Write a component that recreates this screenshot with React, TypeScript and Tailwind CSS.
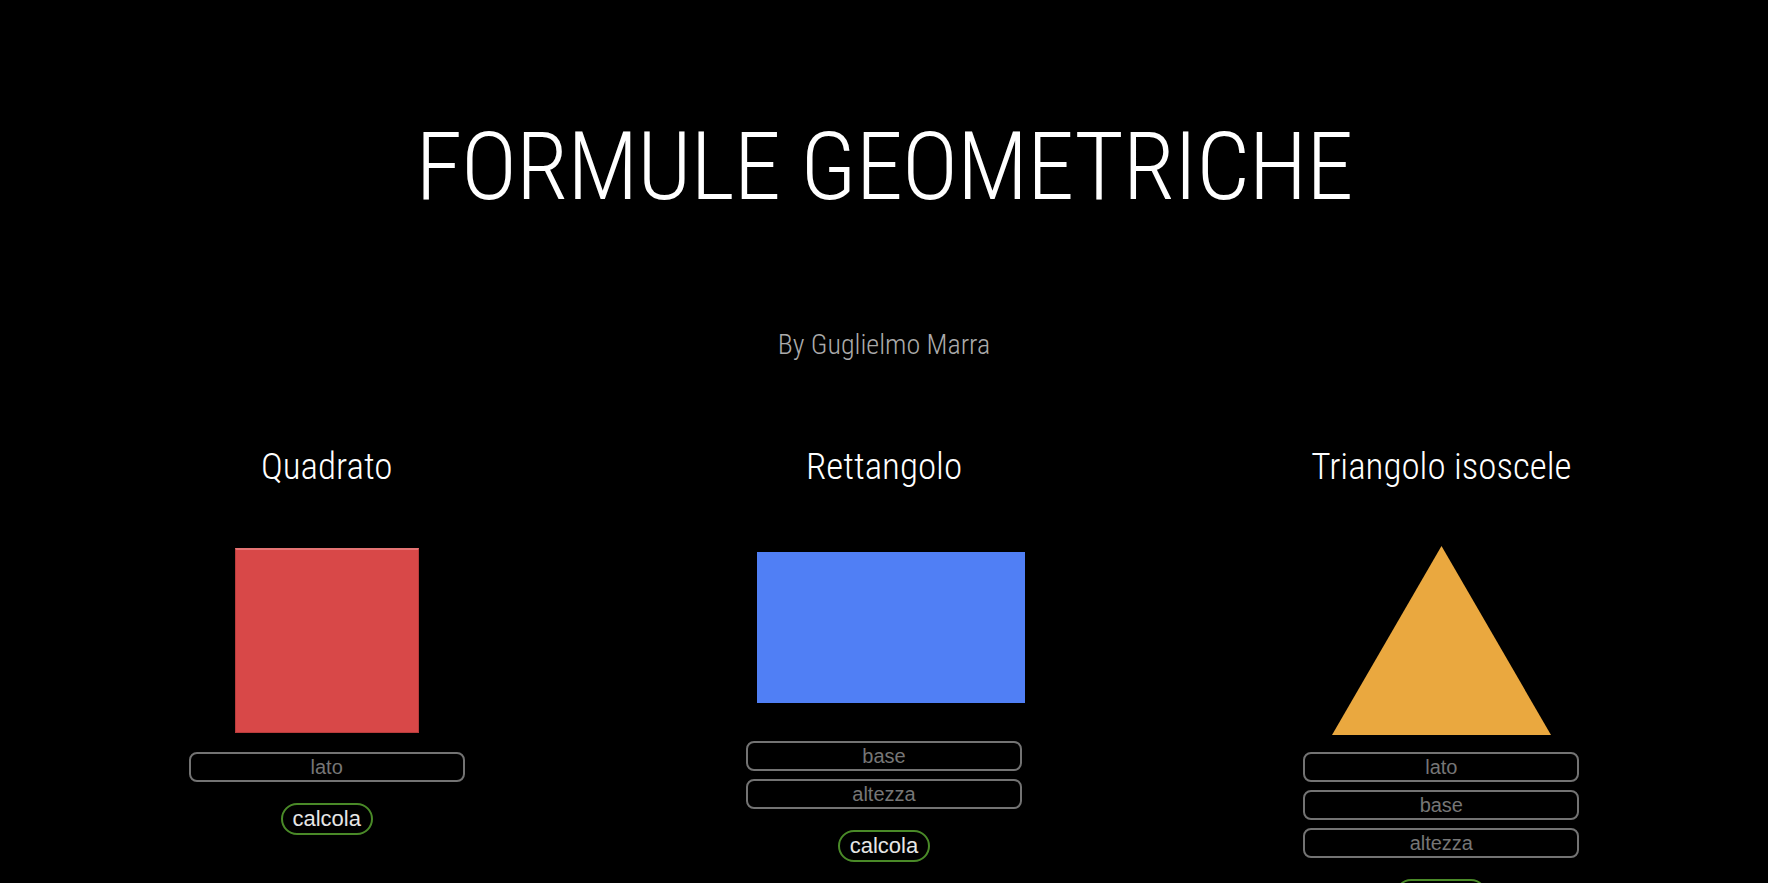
import React from "react";

const fieldCls =
  "w-[276px] h-[30px] rounded-[8px] border-2 border-[#737373] bg-black text-center text-[20px] text-[#8a8a8a] placeholder:text-[#767676] outline-none font-['Liberation_Sans',Arial,sans-serif]";

const Fields = ({ names }: { names: string[] }) => (
  <div className="flex flex-col items-center gap-[8px]">
    {names.map((n) => (
      <input key={n} className={fieldCls} placeholder={n} />
    ))}
    <button className="mt-[13px] w-[92px] h-[32px] rounded-full border-2 border-[#4a8a28] bg-black text-[22px] leading-none text-[#e6e6e6] font-['Liberation_Sans',Arial,sans-serif]">
      calcola
    </button>
  </div>
);

export default function App() {
  return (
    <div className="min-h-screen bg-black text-white font-['Roboto_Condensed',Roboto,sans-serif] font-light overflow-hidden">
      <h1 className="pt-[119px] text-center text-[95px] leading-[95px] tracking-[-1px] font-light">
        FORMULE GEOMETRICHE
      </h1>
      <p className="mt-[117px] text-center text-[28px] leading-[28px] text-[#ababab]">
        By Guglielmo Marra
      </p>

      <div className="mt-[89px] grid grid-cols-3 px-[48px]">
        <div className="flex flex-col items-center">
          <h2 className="text-[37px] leading-[37px] font-light">Quadrato</h2>
          <div className="mt-[63px] mb-[19px] w-[184px] h-[185px] bg-[#d84848] border border-[#b83c3c] border-t-2 border-t-[#e57474]" />
          <Fields names={["lato"]} />
        </div>

        <div className="flex flex-col items-center">
          <h2 className="text-[37px] leading-[37px] font-light">Rettangolo</h2>
          <div className="mt-[67px] mb-[38px] ml-[14px] w-[268px] h-[151px] bg-[#507ff5]" />
          <Fields names={["base", "altezza"]} />
        </div>

        <div className="flex flex-col items-center">
          <h2 className="text-[37px] leading-[37px] font-light">Triangolo isoscele</h2>
          <svg className="mt-[61px] mb-[17px]" width="219" height="189" viewBox="0 0 219 189">
            <polygon points="109.5,0 219,189 0,189" fill="#eaa83f" />
          </svg>
          <Fields names={["lato", "base", "altezza"]} />
        </div>
      </div>
    </div>
  );
}
